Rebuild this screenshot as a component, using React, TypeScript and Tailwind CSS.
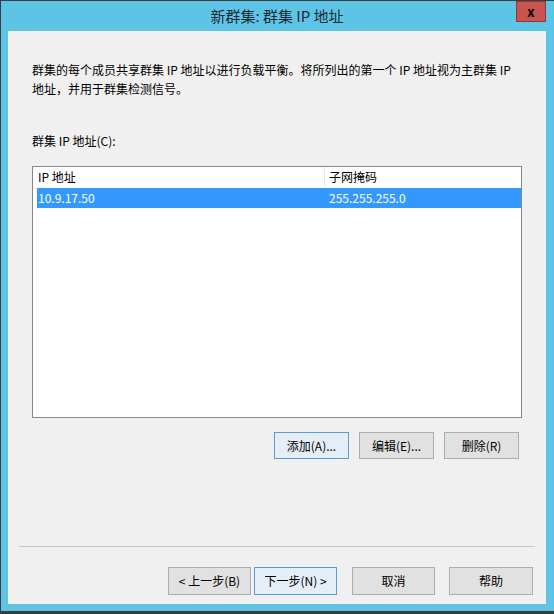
const font = { fontFamily: '"Noto Sans CJK SC", "Liberation Sans", sans-serif' };

function Btn({ label, focused, w }: { label: string; focused?: boolean; w: string }) {
  return (
    <button
      className={`${w} flex items-center justify-center border text-[12px] text-black ${
        focused ? 'border-[#5a9bd5] bg-[#e5eef7]' : 'border-[#adadad] bg-[#e1e1e1]'
      }`}
    >
      {label}
    </button>
  );
}

export default function App() {
  return (
    <div className="flex h-[614px] w-[554px] flex-col bg-[#3c3c3c] pl-[1px] pt-[1px]" style={font}>
      <div className="flex flex-1 flex-col bg-[#5ec4e6] pb-[7px] pl-[7px] pr-[8px]">
        {/* title bar */}
        <div className="relative flex h-[30px] items-center justify-center">
          <span className="text-[15px] text-[#1b2b36]">新群集: 群集 IP 地址</span>
          <div className="absolute right-0 top-0 flex h-[21px] w-[30px] items-center justify-center border border-[#8a3a3a] bg-[#c9534f]">
            <span className="text-[13px] font-bold leading-none text-black">x</span>
          </div>
        </div>

        {/* body */}
        <div className="flex flex-1 flex-col bg-[#f0f0f0] pb-[9px] pt-[29px]">
          <p className="pl-[24px] text-[12px] leading-[19px] text-black">
            群集的每个成员共享群集 IP 地址以进行负载平衡。将所列出的第一个 IP 地址视为主群集 IP
            <br />
            地址，并用于群集检测信号。
          </p>

          <p className="mt-[34px] pl-[24px] text-[12px] leading-[18px] text-black">群集 IP 地址(C):</p>

          <div className="ml-[24px] mt-[16px] flex h-[252px] w-[490px] flex-col border border-[#828790] bg-white">
            <div className="flex h-[20px] text-[12px] text-black">
              <div className="flex w-[292px] items-center border-r border-[#e5e5e5] pl-[5px]">IP 地址</div>
              <div className="flex items-center pl-[4px]">子网掩码</div>
            </div>
            <div className="ml-[4px] mt-[1px] flex h-[20px] bg-[#3399ff] text-[12px] text-white">
              <div className="flex w-[288px] items-center pl-[1px]">10.9.17.50</div>
              <div className="flex items-center pl-[4px]">255.255.255.0</div>
            </div>
          </div>

          <div className="mt-[14px] flex h-[27px] justify-end gap-[10px] pr-[27px]">
            <Btn label="添加(A)..." focused w="w-[75px]" />
            <Btn label="编辑(E)..." w="w-[75px]" />
            <Btn label="删除(R)" w="w-[75px]" />
          </div>

          <div className="flex-1" />
          <div className="mx-[11px] h-px bg-[#c8c8c8]" />

          <div className="mt-[20px] flex h-[28px] justify-end pr-[13px]">
            <Btn label="< 上一步(B)" w="w-[83px]" />
            <div className="ml-[3px]">
              <Btn label="下一步(N) >" focused w="w-[83px] h-full" />
            </div>
            <div className="ml-[15px]">
              <Btn label="取消" w="w-[83px] h-full" />
            </div>
            <div className="ml-[14px]">
              <Btn label="帮助" w="w-[84px] h-full" />
            </div>
          </div>
        </div>
      </div>
      <div className="h-[3px]" />
    </div>
  );
}
